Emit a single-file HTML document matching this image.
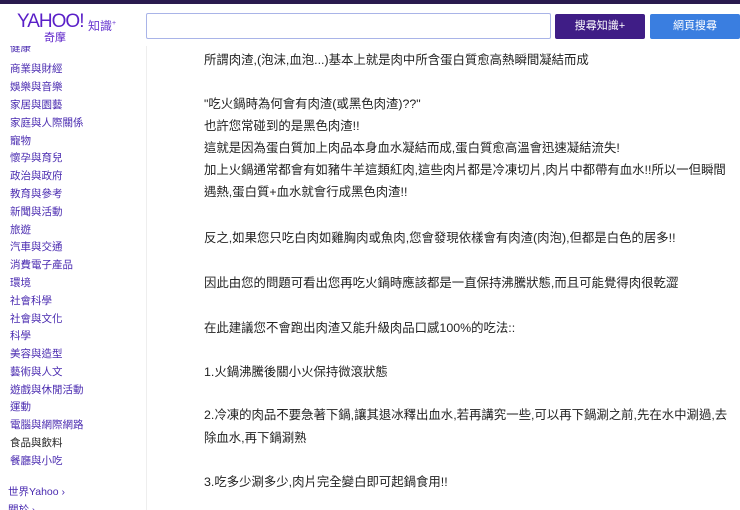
<!DOCTYPE html>
<html><head><meta charset="utf-8"><style>
*{margin:0;padding:0;box-sizing:border-box}
body{width:740px;height:510px;overflow:hidden;background:#fff;font-family:"Liberation Sans","Noto Sans CJK TC",sans-serif;position:relative}
.top{position:absolute;left:0;top:0;width:740px;height:4px;background:#2a1a4e}
.logo{position:absolute;left:17px;top:11px;color:#5a1fc8;font-size:19px;letter-spacing:-1px;font-weight:normal}
.logo2{position:absolute;left:44px;top:29px;color:#5a1fc8;font-size:11px}
.logo3{position:absolute;left:88px;top:17px;color:#6a3ad0;font-size:12px}
.inp{position:absolute;left:146px;top:13px;width:405px;height:26px;border:1px solid #a9b4e8;border-radius:2px}
.b1{position:absolute;left:555px;top:14px;width:90px;height:25px;background:#3f1d86;color:#fff;font-size:11px;text-align:center;line-height:25px;border-radius:2px}
.b2{position:absolute;left:650px;top:14px;width:90px;height:25px;background:#3a7ee0;color:#fff;font-size:11px;text-align:center;line-height:25px;border-radius:2px}
.side{position:absolute;left:0;top:46px;width:147px;height:464px;border-right:1px solid #eee;overflow:hidden}
.side div{position:absolute;left:10px;font-size:10.5px;color:#4a2bb0;white-space:nowrap}
.main{position:absolute;left:204px;font-size:12.4px;color:#222;white-space:nowrap}
</style></head><body>
<div class="top"></div>
<div class="logo">YAHOO!</div>
<div class="logo2">奇摩</div>
<div class="logo3">知識<sup style="font-size:7px">+</sup></div>
<div class="inp"></div>
<div class="b1">搜尋知識+</div>
<div class="b2">網頁搜尋</div>
<div class="side">
<div style="top:-6px">健康</div>
<div style="top:15px">商業與財經</div>
<div style="top:33px">娛樂與音樂</div>
<div style="top:51px">家居與園藝</div>
<div style="top:69px">家庭與人際關係</div>
<div style="top:87px">寵物</div>
<div style="top:104px">懷孕與育兒</div>
<div style="top:122px">政治與政府</div>
<div style="top:140px">教育與參考</div>
<div style="top:158px">新聞與活動</div>
<div style="top:176px">旅遊</div>
<div style="top:193px">汽車與交通</div>
<div style="top:211px">消費電子產品</div>
<div style="top:229px">環境</div>
<div style="top:247px">社會科學</div>
<div style="top:265px">社會與文化</div>
<div style="top:282px">科學</div>
<div style="top:300px">美容與造型</div>
<div style="top:318px">藝術與人文</div>
<div style="top:336px">遊戲與休閒活動</div>
<div style="top:353px">運動</div>
<div style="top:371px">電腦與網際網路</div>
<div style="top:389px;color:#222">食品與飲料</div>
<div style="top:407px">餐廳與小吃</div>
<div style="top:438px;left:8px">世界Yahoo ›</div>
<div style="top:456px;left:8px">關於 ›</div>
</div>
<div class="main" style="top:50px">所謂肉渣,(泡沫,血泡...)基本上就是肉中所含蛋白質愈高熱瞬間凝結而成</div>
<div class="main" style="top:94px">"吃火鍋時為何會有肉渣(或黑色肉渣)??"</div>
<div class="main" style="top:116px">也許您常碰到的是黑色肉渣!!</div>
<div class="main" style="top:138px">這就是因為蛋白質加上肉品本身血水凝結而成,蛋白質愈高溫會迅速凝結流失!</div>
<div class="main" style="top:160px">加上火鍋通常都會有如豬牛羊這類紅肉,這些肉片都是冷凍切片,肉片中都帶有血水!!所以一但瞬間</div>
<div class="main" style="top:182px">遇熱,蛋白質+血水就會行成黑色肉渣!!</div>
<div class="main" style="top:228px">反之,如果您只吃白肉如雞胸肉或魚肉,您會發現依樣會有肉渣(肉泡),但都是白色的居多!!</div>
<div class="main" style="top:273px">因此由您的問題可看出您再吃火鍋時應該都是一直保持沸騰狀態,而且可能覺得肉很乾澀</div>
<div class="main" style="top:318px">在此建議您不會跑出肉渣又能升級肉品口感100%的吃法::</div>
<div class="main" style="top:362px">1.火鍋沸騰後關小火保持微滾狀態</div>
<div class="main" style="top:405px">2.冷凍的肉品不要急著下鍋,讓其退冰釋出血水,若再講究一些,可以再下鍋涮之前,先在水中涮過,去</div>
<div class="main" style="top:428px">除血水,再下鍋涮熟</div>
<div class="main" style="top:472px">3.吃多少涮多少,肉片完全變白即可起鍋食用!!</div>
</body></html>
